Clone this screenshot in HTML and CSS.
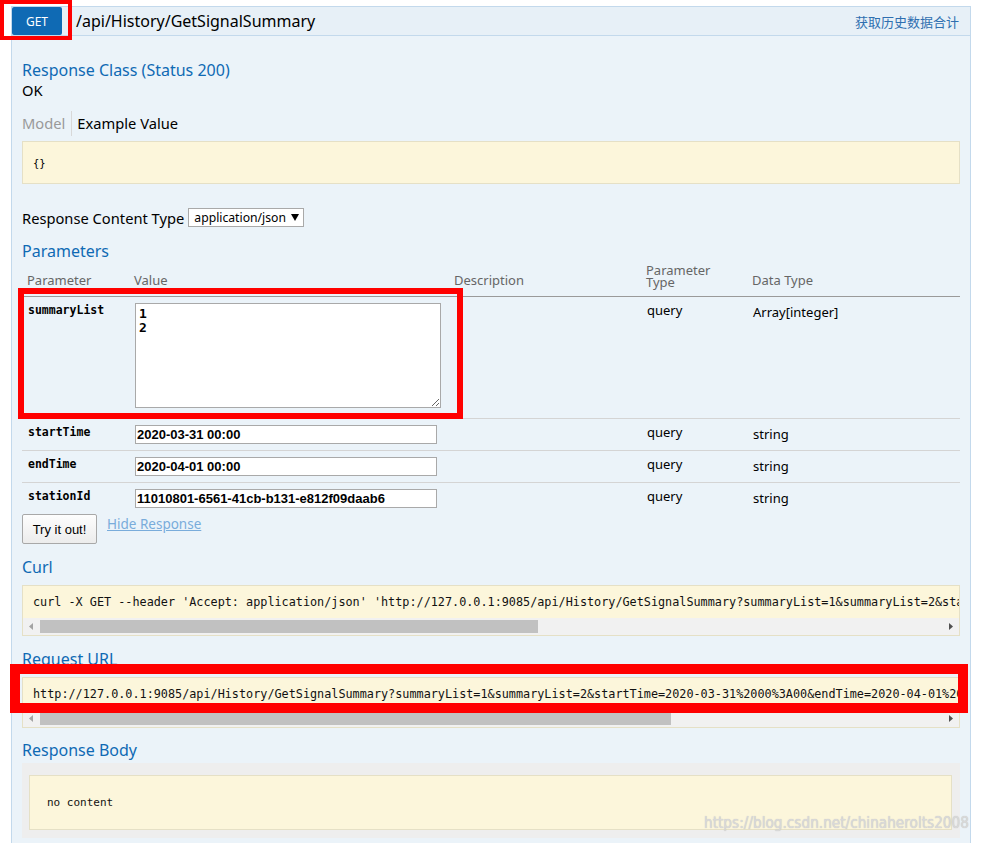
FILE: index.html
```html
<!DOCTYPE html>
<html lang="zh-CN">
<head>
<meta charset="utf-8">
<title>GetSignalSummary</title>
<link rel="stylesheet" href="styles.css">
</head>
<body>
<div class="op">
  <div class="op-head">
    <span class="verb">GET</span>
    <span class="path">/api/History/GetSignalSummary</span>
    <span class="summary">获取历史数据合计</span>
  </div>
  <div class="op-body">
    <h4 class="h-class">Response Class (Status 200)</h4>
    <div class="ok">OK</div>
    <ul class="tabs">
      <li class="tab tab-model">Model</li>
      <li class="tab tab-example">Example Value</li>
    </ul>
    <pre class="snippet">{}</pre>
    <div class="ctype">
      <span class="ctype-label">Response Content Type</span>
      <span class="select">application/json<svg class="caret" width="8" height="7" viewBox="0 0 8 7"><polygon points="0,0 8,0 4,7" fill="#000"/></svg></span>
    </div>
    <h4 class="h-params">Parameters</h4>
    <table class="params">
      <colgroup>
        <col class="c1"><col class="c2"><col class="c3"><col class="c4"><col class="c5">
      </colgroup>
      <thead>
        <tr>
          <th>Parameter</th>
          <th>Value</th>
          <th>Description</th>
          <th class="two">Parameter<br>Type</th>
          <th>Data Type</th>
        </tr>
      </thead>
      <tbody>
        <tr class="row-big">
          <td class="pname">summaryList</td>
          <td><textarea class="ta">1
2</textarea></td>
          <td></td>
          <td class="ptype">query</td>
          <td class="dtype">Array[integer]</td>
        </tr>
        <tr>
          <td class="pname">startTime</td>
          <td><input class="inp" type="text" value="2020-03-31 00:00"></td>
          <td></td>
          <td class="ptype">query</td>
          <td class="dtype">string</td>
        </tr>
        <tr>
          <td class="pname">endTime</td>
          <td><input class="inp" type="text" value="2020-04-01 00:00"></td>
          <td></td>
          <td class="ptype">query</td>
          <td class="dtype">string</td>
        </tr>
        <tr class="row-last">
          <td class="pname">stationId</td>
          <td><input class="inp" type="text" value="11010801-6561-41cb-b131-e812f09daab6"></td>
          <td></td>
          <td class="ptype">query</td>
          <td class="dtype">string</td>
        </tr>
      </tbody>
    </table>
    <div class="actions">
      <button class="try" type="button">Try it out!</button>
      <a class="hide" href="#">Hide Response</a>
    </div>

    <h4 class="h-curl">Curl</h4>
    <div class="codebox">
      <div class="code">curl -X GET --header 'Accept: application/json' 'http://127.0.0.1:9085/api/History/GetSignalSummary?summaryList=1&amp;summaryList=2&amp;startTime=2020-03-31%2000%3A00&amp;endTime=2020-04-01%2000%3A00&amp;stationId=11010801-6561-41cb-b131-e812f09daab6'</div>
      <div class="hscroll">
        <span class="arrow"><svg width="17" height="17" viewBox="0 0 17 17"><polygon points="10,5 10,12 6,8.5" fill="#a3a3a3"/></svg></span>
        <span class="thumb thumb-curl"></span>
        <span class="track"></span>
        <span class="arrow"><svg width="17" height="17" viewBox="0 0 17 17"><polygon points="7,5 7,12 11,8.5" fill="#505050"/></svg></span>
      </div>
    </div>

    <h4 class="h-url">Request URL</h4>
    <div class="codebox codebox-url">
      <div class="code">http://127.0.0.1:9085/api/History/GetSignalSummary?summaryList=1&amp;summaryList=2&amp;startTime=2020-03-31%2000%3A00&amp;endTime=2020-04-01%2000%3A00&amp;stationId=11010801-6561-41cb-b131-e812f09daab6</div>
      <div class="hscroll">
        <span class="arrow"><svg width="17" height="17" viewBox="0 0 17 17"><polygon points="10,5 10,12 6,8.5" fill="#a3a3a3"/></svg></span>
        <span class="thumb thumb-url"></span>
        <span class="track"></span>
        <span class="arrow"><svg width="17" height="17" viewBox="0 0 17 17"><polygon points="7,5 7,12 11,8.5" fill="#505050"/></svg></span>
      </div>
    </div>

    <h4 class="h-body">Response Body</h4>
    <div class="respwrap">
      <div class="resp">no content</div>
    </div>
  </div>
</div>

<div class="mark mark-get"></div>
<div class="mark mark-param"></div>
<div class="mark mark-url"></div>
<div class="watermark">https://blog.csdn.net/chinaherolts2008</div>
</body>
</html>
```

FILE: styles.css
```css
* { box-sizing: border-box; }

html, body {
  margin: 0;
  padding: 0;
  background: #fff;
}

body {
  position: relative;
  height: 843px;
  overflow: hidden;
  font-family: "Noto Sans", "Noto Sans CJK SC", sans-serif;
  font-size: 14.7px;
  color: #000;
}

.op {
  margin: 6px 0 0 11px;
  width: 960px;
}

/* header bar */
.op-head {
  display: flex;
  align-items: center;
  height: 30px;
  background: #e7f0f7;
  border: 1px solid #c3d9ec;
}

.verb {
  display: flex;
  align-items: center;
  justify-content: center;
  width: 50px;
  height: 28px;
  background: #0f6ab4;
  color: #fff;
  font-size: 12px;
  border-radius: 2px;
}

.path {
  margin-left: 14px;
  font-size: 16px;
  color: #000;
}

.summary {
  margin-left: auto;
  padding-right: 11px;
  font-size: 13px;
  color: #2f6fb0;
}

/* body */
.op-body {
  background: #ebf3f9;
  border-left: 1px solid #c3d9ec;
  border-right: 1px solid #c3d9ec;
  padding: 24px 10px 0;
  min-height: 820px;
}

h4 {
  margin: 0;
  font-size: 16px;
  line-height: 20px;
  font-weight: normal;
  color: #0f6ab4;
}

.ok {
  margin-top: 1px;
  line-height: 18px;
}

.tabs {
  display: flex;
  margin: 12px 0 0;
  padding: 0;
  list-style: none;
  height: 25px;
  line-height: 25px;
}

.tab-model {
  color: #999;
  padding-right: 6px;
  border-right: 1px solid #d8d8d8;
}

.tab-example {
  padding-left: 5px;
}

.snippet {
  display: flex;
  align-items: center;
  margin: 5px 0 0;
  height: 43px;
  padding: 0 10px;
  background: #fcf6db;
  border: 1px solid #e5e0c6;
  font-family: "DejaVu Sans Mono", monospace;
  font-size: 10.5px;
}

.ctype {
  display: flex;
  align-items: center;
  gap: 4px;
  margin-top: 23px;
  height: 21px;
}

.select {
  display: flex;
  align-items: center;
  gap: 5px;
  height: 19px;
  padding: 0 4px 0 5px;
  background: #fff;
  border: 1px solid #a9a9a9;
  font-size: 12.2px;
}

.h-params {
  margin-top: 13px;
}

/* parameters table */
.params {
  width: 938px;
  table-layout: fixed;
  border-collapse: separate;
  border-spacing: 0;
}

.c1 { width: 107px; }
.c2 { width: 320px; }
.c3 { width: 192px; }
.c4 { width: 106px; }
.c5 { width: 213px; }

.params th {
  padding: 5px 5px 8px;
  font-size: 13px;
  line-height: 16px;
  font-weight: normal;
  color: #666;
  text-align: left;
  vertical-align: bottom;
  border-bottom: 1px solid #9a9a9a;
}

.params th.two {
  line-height: 12px;
  padding-top: 3px;
}

.params td {
  padding: 6px 6px 6px;
  vertical-align: top;
  border-bottom: 1px solid #d4d4d4;
  font-size: 13px;
  line-height: 14px;
}

.params .row-big td {
  padding-bottom: 10px;
}

.params .row-last td {
  border-bottom: 0;
  padding-bottom: 6px;
}

.params td.pname {
  font-family: "DejaVu Sans Mono", monospace;
  font-weight: bold;
  font-size: 11.5px;
}

.params td.dtype {
  padding-top: 8px;
}

.ta {
  display: block;
  width: 306px;
  height: 105px;
  margin: 0;
  padding: 3px 3px;
  border: 1px solid #a9a9a9;
  background: #fff;
  font-family: "DejaVu Sans Mono", monospace;
  font-weight: bold;
  font-size: 13px;
  line-height: 14px;
  color: #000;
}

.inp {
  display: block;
  width: 302px;
  height: 19px;
  margin: 0;
  padding: 0 1px;
  border: 1px solid #a9a9a9;
  background: #fff;
  font-family: "Liberation Sans", Arial, sans-serif;
  font-weight: bold;
  font-size: 13px;
  color: #000;
}

.actions {
  display: flex;
  align-items: flex-start;
}

.try {
  width: 75px;
  height: 30px;
  margin: 0;
  padding: 0;
  border: 1px solid #a8a8a8;
  border-radius: 2px;
  background: linear-gradient(#fdfdfd, #ececec);
  font-family: "Liberation Sans", Arial, sans-serif;
  font-size: 13px;
  color: #000;
}

.hide {
  margin-left: 10px;
  margin-top: 1px;
  line-height: 18px;
  font-size: 13.5px;
  color: #79acdb;
  text-decoration: underline;
}

.h-curl { margin-top: 13px; }
.h-url { margin-top: 13px; }
.h-body { margin-top: 12px; }

.codebox {
  margin-top: 8px;
  border: 1px solid #e5e0c6;
  background: #fcf6db;
}

.codebox-url {
  margin-top: 8px;
}

.code {
  height: 32px;
  padding: 0 10px;
  line-height: 32px;
  white-space: pre;
  overflow: hidden;
  font-family: "DejaVu Sans Mono", monospace;
  font-size: 11.8px;
  color: #111;
}

.hscroll {
  display: flex;
  height: 17px;
  background: #f1f1f1;
}

.arrow {
  display: block;
  width: 17px;
  height: 17px;
}

.arrow svg { display: block; }

.thumb {
  height: 13px;
  margin-top: 2px;
  background: #c1c1c1;
}

.thumb-curl { width: 498px; }
.thumb-url { width: 631px; }

.track { flex: 1; }

.respwrap {
  margin-top: 3px;
  padding: 12px 8px 8px 7px;
  background: #eeeeee;
}

.resp {
  display: flex;
  align-items: center;
  height: 55px;
  padding: 0 17px;
  border: 1px solid #e5e0c6;
  background: #fcf6db;
  font-family: "DejaVu Sans Mono", monospace;
  font-size: 11px;
  color: #111;
}

/* annotation overlays */
.mark {
  position: absolute;
  border-style: solid;
  border-color: #ff0000;
}

.mark-get {
  left: 0;
  top: 0;
  width: 72px;
  height: 40px;
  border-width: 4px;
}

.mark-param {
  left: 18px;
  top: 288px;
  width: 445px;
  height: 131px;
  border-width: 6px;
}

.mark-url {
  left: 10px;
  top: 664px;
  width: 958px;
  height: 49px;
  border-width: 10px;
}

.watermark {
  position: absolute;
  left: 704px;
  top: 814px;
  font-family: "DejaVu Sans", sans-serif;
  font-stretch: condensed;
  font-size: 15.2px;
  color: #d9d9d9;
  text-shadow: 0 0 1px #bdbdbd;
  white-space: nowrap;
}
```
